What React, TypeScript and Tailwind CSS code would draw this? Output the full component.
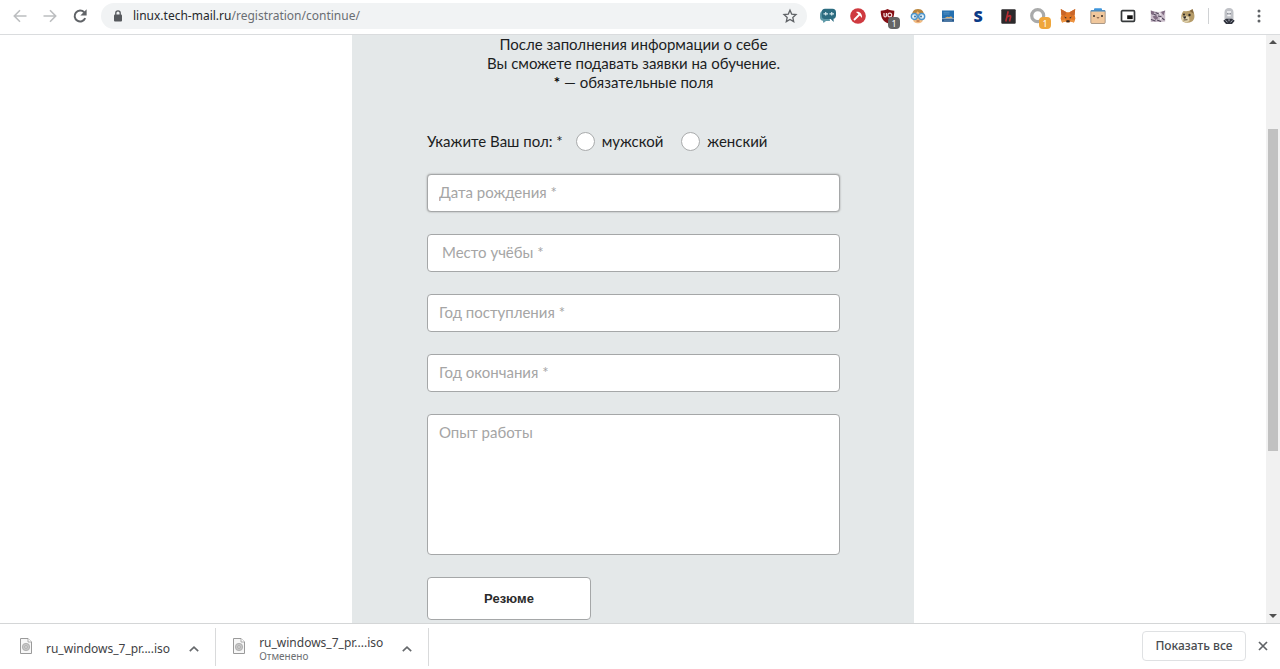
import type { ReactNode } from 'react';

function IconButton({ label, children }: { label: string; children: ReactNode }) {
  return (
    <button type="button" aria-label={label} className="flex h-7 w-[30px] shrink-0 items-center justify-center">
      {children}
    </button>
  );
}

function BackIcon() {
  return (
    <svg width="16" height="16" viewBox="0 0 16 16" fill="none" stroke="#bcbec0" strokeWidth="1.6">
      <path d="M14.5 8H2.5M8 2.3 2.3 8 8 13.7" />
    </svg>
  );
}

function ForwardIcon() {
  return (
    <svg width="16" height="16" viewBox="0 0 16 16" fill="none" stroke="#bcbec0" strokeWidth="1.6">
      <path d="M1.5 8h12M8 2.3 13.7 8 8 13.7" />
    </svg>
  );
}

function ReloadIcon() {
  return (
    <svg width="16" height="16" viewBox="0 0 16 16">
      <path d="M13.2 10.2A5.500 5.500 0 1 1 12.2 4.300" fill="none" stroke="#606367" strokeWidth="2" />
      <path d="M14.600 1.200v6.200H8.400z" fill="#606367" />
    </svg>
  );
}

function LockIcon() {
  return (
    <svg width="10" height="12" viewBox="0 0 10 12" className="shrink-0">
      <rect x="1" y="4.5" width="8" height="7" rx="1" fill="#56595d" />
      <path d="M2.8 5V3a2.2 2.2 0 0 1 4.4 0v2" fill="none" stroke="#56595d" strokeWidth="1.3" />
    </svg>
  );
}

function StarIcon() {
  return (
    <svg width="16" height="16" viewBox="0 0 16 16" fill="none" stroke="#606367" strokeWidth="1.3">
      <path d="m8 2.2 1.7 3.9 4.3.4-3.2 2.9.9 4.2L8 11.4l-3.7 2.2.9-4.2L2 6.5l4.3-.4z" />
    </svg>
  );
}

function ChatIcon() {
  return (
    <svg width="18" height="16" viewBox="0 0 18 16">
      <path d="M4 3C2 3.200 1 4.500 1 6.500v3c0 2 1.200 3 2.800 3.200L4.500 15l2.500-2h4l-.5-3z" fill="#5f9aa8" />
      <path d="M6 .8h7.500c2.300 0 3.500 1.200 3.500 3.500v3c0 2-1 3.300-2.500 3.500l.2 3.200-3-3H6c-2.200 0-3.300-1.300-3.300-3.300V4.300C2.700 2 3.800.8 6 .8z" fill="#2c6c80" />
      <path d="M4.500 5.800H9M6.700 4v3.600M10.500 5.800H15M12.700 4v3.600" stroke="#d6e8ec" strokeWidth="1.200" />
    </svg>
  );
}

function PickIcon() {
  return (
    <svg width="16" height="16" viewBox="0 0 16 16">
      <circle cx="8" cy="8" r="7.800" fill="#cf3a40" />
      <path d="m4 12 6-6" stroke="#fff" strokeWidth="1.800" />
      <path d="M6 4c3.500-1 6.500 2 6 6l-2-2.300L8.300 6z" fill="#fff" />
    </svg>
  );
}

function ShieldIcon() {
  return (
    <span className="relative block h-4 w-4">
      <svg width="16" height="16" viewBox="0 0 16 16">
        <path d="M7.500 1c2 1.200 4.500 1.700 6.800 1.700C14.300 9 12.500 13 7.500 15.200 2.500 13 .7 9 .7 2.700 3 2.700 5.500 2.200 7.500 1z" fill="#850f14" />
        <path d="M4 5v2.700q0 1.200 1.200 1.200T6.400 7.700V5" fill="none" stroke="#f4dede" strokeWidth="1.200" />
        <circle cx="9.800" cy="7" r="1.900" fill="none" stroke="#f4dede" strokeWidth="1.200" />
      </svg>
      <span className="absolute top-[9px] left-2 flex h-3 w-3 items-center justify-center rounded-sm bg-[#646464] text-[9px] leading-none text-white">
        1
      </span>
    </span>
  );
}

function GlassesIcon() {
  return (
    <svg width="16" height="16" viewBox="0 0 16 16">
      <path d="M2 10C1.500 4 3.500 1 8 1s6.500 3 6 9l-1.500 2h-9z" fill="#b8843c" />
      <path d="M3 6.500h10v4.500c0 3-2.300 4.300-5 4.300S3 14 3 11z" fill="#f3bd83" />
      <path d="M4.500 6.500C6 5.500 7 4.300 7.500 3.300 9 4.800 10 5.700 12 6.500z" fill="#f0b87c" />
      <circle cx="4.300" cy="8.500" r="3" fill="#e3f1fa" stroke="#4b95cd" strokeWidth="1.400" />
      <circle cx="11.700" cy="8.500" r="3" fill="#e3f1fa" stroke="#4b95cd" strokeWidth="1.400" />
      <circle cx="5" cy="8.500" r=".9" fill="#2d6591" />
      <circle cx="11" cy="8.500" r=".9" fill="#2d6591" />
      <path d="M6.500 13h3" stroke="#9d5131" />
    </svg>
  );
}

function LaptopIcon() {
  return (
    <svg width="14" height="14" viewBox="0 0 14 14">
      <rect x="1" y="1.500" width="12" height="8" fill="#2670b0" />
      <path d="M2.500 3.300h6M2.500 5h6" stroke="#5c97c6" strokeWidth=".8" />
      <path d="M1 9.500h12v3.300H1z" fill="#24588e" />
      <path d="M3.500 9.300q2-2 3.500-1.500t3-.5l2 2z" fill="#dcae72" />
      <path d="M1 9.700h12" stroke="#9fb3c4" strokeWidth=".8" />
      <path d="M3 11.300h8" stroke="#5f8ab3" strokeWidth=".8" />
    </svg>
  );
}

function HypeIcon() {
  return (
    <svg width="15" height="15" viewBox="0 0 15 15">
      <rect x=".3" y=".3" width="14.400" height="14.400" rx="1" fill="#2b292b" />
      <path d="M7.200 2.200 4.800 12.500M6 8q4-2.800 3.600 0L8.500 12.500" fill="none" stroke="#b92c32" strokeWidth="1.600" />
    </svg>
  );
}

function RingIcon() {
  return (
    <span className="relative block h-4 w-4">
      <svg width="16" height="16" viewBox="0 0 16 16">
        <circle cx="7.700" cy="7.700" r="6" fill="none" stroke="#a9aaaa" strokeWidth="3.200" />
      </svg>
      <span className="absolute top-[9px] left-[9px] flex h-3 w-3 items-center justify-center rounded-sm bg-[#efa63b] text-[9px] leading-none text-white">
        1
      </span>
    </span>
  );
}

function FoxIcon() {
  return (
    <svg width="16" height="16" viewBox="0 0 16 16">
      <path d="m.8 1 5.700 3.300h3L15.200 1l-.6 6 .8 3.500-1.400 4-3.500-1-1.500 1H7l-1.500-1-3.500 1-1.400-4L1.400 7z" fill="#e27828" />
      <path d="m.8 1 5.700 3.300L5 7.500 1.400 7zM15.200 1 9.500 4.300 11 7.500l3.600-.5z" fill="#c9662a" />
      <path d="m4 8.500 2.500 1-.5 1.200zM12 8.500l-2.500 1 .5 1.200z" fill="#33302d" />
      <path d="M6.500 12.200h3l.2 2H6.300z" fill="#352a25" />
      <path d="m1.500 12 4-.5v2l-3.500 1zM14.500 12l-4-.5v2l3.500 1z" fill="#ec9440" />
    </svg>
  );
}

function FaceBagIcon() {
  return (
    <svg width="16" height="16" viewBox="0 0 16 16">
      <rect x="4" y=".2" width="8" height="3.500" rx="1" fill="#3e95db" />
      <rect x=".8" y="2.500" width="14.400" height="13" rx="1" fill="#f0c79c" stroke="#8a7868" strokeWidth=".7" />
      <path d="M.8 2.200h14.400v1.300H.8z" fill="#438dc9" />
      <circle cx="4" cy="8" r="1" fill="#302b29" />
      <circle cx="12" cy="8" r="1" fill="#302b29" />
      <path d="M6.800 9.500q1.200 1 2.400 0" fill="none" stroke="#654434" strokeWidth=".9" />
    </svg>
  );
}

function PipIcon() {
  return (
    <svg width="16" height="16" viewBox="0 0 16 16">
      <rect x="1.500" y="2.700" width="13" height="10.600" rx="1" fill="#fff" stroke="#35383a" strokeWidth="1.700" />
      <rect x="7.200" y="7.300" width="5.500" height="3.800" fill="#111" />
    </svg>
  );
}

function CatIcon() {
  return (
    <svg width="16" height="16" viewBox="0 0 16 16">
      <path d="M.8 2.500 5 3.500l3.500.5 3.500-.5 3.200-1v11l-4 .5H.8z" fill="#cbbecb" />
      <path d="m.8 2.500 4 1.500-1.800 3-2-1zM15.200 2.500 11 4l2.500 3.500zM2.500 8.500 6 7.500l2.500 2.500-3 2z" fill="#806b82" />
      <path d="M5.500 4.500 10 6.500M3.500 6.300l3 1M8 8l3.500.8M1 11.500l4.500 1.500M7 12l4 1.500M12 10l2.500 2" stroke="#51465b" strokeWidth="1.100" />
      <path d="m9.500 4 2 3-3-.5zM10 9.500l2 1-2 1.500z" fill="#f5eff4" />
    </svg>
  );
}

function DogIcon() {
  return (
    <svg width="16" height="16" viewBox="0 0 16 16">
      <path d="M3.500 3 6 3.300l3.500-.6L12.700 1l1 3.500c1.300 3.500 1 7-1.700 9-3.500 2-8 1.500-10-.8C.5 9 1.300 5.500 3.500 3z" fill="#b69c69" />
      <path d="m9.500 3 3-1.800 1.300 4.500z" fill="#846942" />
      <path d="M1.700 9 5.500 7.500 9 9l.5 4L6 14.500 2 12.700z" fill="#e2d3ad" />
      <circle cx="4" cy="6.500" r="1" fill="#2c2823" />
      <circle cx="9.500" cy="7" r="1.200" fill="#2c2823" />
      <path d="m3 8.500 3.300-.3-.8 2.300-1.500.2z" fill="#292525" />
      <path d="m3.500 12 4-.3" stroke="#574a37" />
    </svg>
  );
}

function AvatarIcon() {
  return (
    <svg width="14" height="18" viewBox="0 0 14 18">
      <path d="M2.500 12.500V5.500Q2.500 1 7 1t4.500 4.500v7z" fill="#bfc1c6" />
      <path d="M5 5h4M5.300 8.500h3.400" stroke="#f5f5f7" strokeWidth="1.500" />
      <path d="M5 6.700h1.300M7.700 6.700H9" stroke="#7e828a" />
      <path d="M1.300 13.700 4 11.700h6l2.700 2L10 17H4z" fill="#2f323c" />
      <path d="m3.500 13.500 2 1.700M10.500 13.500l-2 1.700M7 12.200v2" stroke="#a7abb8" />
    </svg>
  );
}

function MenuIcon() {
  return (
    <svg width="4" height="14" viewBox="0 0 4 14" fill="#606367">
      <circle cx="2" cy="2" r="1.500" />
      <circle cx="2" cy="7" r="1.500" />
      <circle cx="2" cy="12" r="1.500" />
    </svg>
  );
}

function BrowserBar() {
  return (
    <header className="flex h-[35px] shrink-0 items-center border-b border-[#dadcde] bg-white pr-[6px] pb-[2px] pl-[5px]">
      <IconButton label="Назад"><BackIcon /></IconButton>
      <IconButton label="Вперёд"><ForwardIcon /></IconButton>
      <IconButton label="Обновить"><ReloadIcon /></IconButton>
      <div className="mx-[6px] flex h-[26px] min-w-0 flex-1 items-center rounded-full bg-[#f1f3f4] pr-[2px] pl-3">
        <LockIcon />
        <a href="#address" className="ml-[10px] flex-1 truncate font-['Noto_Sans',sans-serif] text-xs text-[#6a6e73]">
          <span className="text-[#26282b]">linux.tech-mail.ru</span>/registration/continue/
        </a>
        <IconButton label="Добавить в закладки"><StarIcon /></IconButton>
      </div>
      <IconButton label="Сообщения"><ChatIcon /></IconButton>
      <IconButton label="Инструмент"><PickIcon /></IconButton>
      <IconButton label="Блокировщик"><ShieldIcon /></IconButton>
      <IconButton label="Помощник"><GlassesIcon /></IconButton>
      <IconButton label="Компьютер"><LaptopIcon /></IconButton>
      <IconButton label="Поиск">
        <span className="font-['Noto_Sans',sans-serif] text-base leading-none font-black text-[#0b3b87]">S</span>
      </IconButton>
      <IconButton label="Панель"><HypeIcon /></IconButton>
      <IconButton label="Уведомления"><RingIcon /></IconButton>
      <IconButton label="Кошелёк"><FoxIcon /></IconButton>
      <IconButton label="Персонаж"><FaceBagIcon /></IconButton>
      <IconButton label="Картинка в картинке"><PipIcon /></IconButton>
      <IconButton label="Кот"><CatIcon /></IconButton>
      <IconButton label="Собака"><DogIcon /></IconButton>
      <div className="mx-[5px] h-4 w-px bg-[#d0d2d4]" />
      <IconButton label="Профиль"><AvatarIcon /></IconButton>
      <IconButton label="Меню"><MenuIcon /></IconButton>
    </header>
  );
}

const fieldStyle =
  'block w-full rounded-[4px] border border-[#a5a7a8] bg-white px-[11px] text-[15px] text-[#222] outline-none placeholder:text-[#a5a5a5]';

const inputStyle = `${fieldStyle} h-[38px] pb-[2px]`;

const radioStyle =
  'h-[19px] w-[19px] appearance-none rounded-full border border-[#a9abac] bg-white checked:border-4';

function RegistrationForm() {
  return (
    <form className="mx-auto min-h-full w-full max-w-[562px] bg-[#e4e8e9] pr-[74px] pb-[3px] pl-[75px] font-[Lato,sans-serif] text-[15px] leading-[19px] text-[#1c1e1f]">
      <p className="text-center">
        После заполнения информации о себе
        <br />
        Вы сможете подавать заявки на обучение.
        <br />
        <b className="text-black">*</b> — обязательные поля
      </p>
      <div role="radiogroup" aria-labelledby="gender-label" className="mt-[37px] flex h-6 items-center">
        <span id="gender-label" className="mr-[13px]">Укажите Ваш пол: *</span>
        <label className="mr-[18px] flex items-center gap-[7px]">
          <input type="radio" name="gender" className={radioStyle} />
          мужской
        </label>
        <label className="flex items-center gap-[7px]">
          <input type="radio" name="gender" className={radioStyle} />
          женский
        </label>
      </div>
      <div className="mt-[21px] flex flex-col gap-[22px]">
        <input aria-label="Дата рождения" placeholder="Дата рождения *" className={`${inputStyle} shadow-[0_0_2px_#999]`} />
        <input aria-label="Место учёбы" placeholder="Место учёбы *" className={`${inputStyle} indent-[3px]`} />
        <input aria-label="Год поступления" placeholder="Год поступления *" className={inputStyle} />
        <input aria-label="Год окончания" placeholder="Год окончания *" className={inputStyle} />
        <textarea aria-label="Опыт работы" placeholder="Опыт работы" className={`${fieldStyle} h-[141px] resize-none py-2`} />
        <button type="button" className="h-[43px] w-[164px] rounded-[4px] border border-[#a5a7a8] bg-white font-['Liberation_Sans',sans-serif] text-[13px] font-bold text-[#2b2b2b]">
          Резюме
        </button>
      </div>
    </form>
  );
}

function Scrollbar() {
  return (
    <div aria-hidden="true" className="flex w-[14px] shrink-0 flex-col items-center bg-[#f1f1f1]">
      <div className="flex h-[14px] items-center">
        <svg width="8" height="4" viewBox="0 0 8 4" fill="#505050"><path d="M4 0 8 4H0z" /></svg>
      </div>
      <div className="flex-80" />
      <div className="w-[10px] flex-322 bg-[#c1c1c1]" />
      <div className="flex-158" />
      <div className="flex h-[14px] items-center">
        <svg width="8" height="4" viewBox="0 0 8 4" fill="#505050"><path d="M0 0h8L4 4z" /></svg>
      </div>
    </div>
  );
}

function DiscIcon() {
  return (
    <svg width="12" height="16" viewBox="0 0 12 16" className="mb-[6px] shrink-0">
      <path d="M.5.5H8l3.500 3.500v11.500H.5z" fill="#f7f7f7" stroke="#9a9a9a" />
      <path d="M8 .5V4h3.500" fill="#fff" stroke="#9a9a9a" strokeWidth=".8" />
      <circle cx="6" cy="9" r="3.700" fill="#c6c6c6" stroke="#a5a5a5" strokeWidth=".7" />
      <circle cx="6" cy="9" r="1.300" fill="#eee" stroke="#999" strokeWidth=".7" />
    </svg>
  );
}

function Download({ name, status }: { name: string; status?: string }) {
  return (
    <div className="flex h-[38px] items-center border-r border-[#d9dadb] pt-1 pr-[6px]">
      <DiscIcon />
      <div className="ml-[14px] text-[#3f4245]">
        <div className="text-xs leading-[14px]">{name}</div>
        {status && <div className="text-[10px] leading-3 text-[#6d7073]">{status}</div>}
      </div>
      <button type="button" aria-label={`Действия: ${name}`} className="ml-[9px] flex h-[30px] w-[30px] items-center justify-center">
        <svg width="10" height="6" viewBox="0 0 10 6" fill="none" stroke="#66696c" strokeWidth="1.600"><path d="m.8 5.200 4.200-4 4.200 4" /></svg>
      </button>
    </div>
  );
}

function DownloadBar() {
  return (
    <footer className="flex h-[46px] shrink-0 items-center border-t border-[#d4d6d7] bg-white pr-[2px] pl-5 font-['Noto_Sans',sans-serif]">
      <div className="flex gap-[17px]">
        <Download name="ru_windows_7_pr....iso" />
        <Download name="ru_windows_7_pr....iso" status="Отменено" />
      </div>
      <button type="button" className="mr-[2px] mb-[2px] ml-auto h-[30px] w-[104px] rounded-[4px] border border-[#dfe1e3] text-xs font-medium text-[#494c50]">
        Показать все
      </button>
      <div className="mb-[2px]">
        <IconButton label="Закрыть">
          <svg width="10" height="10" viewBox="0 0 10 10" stroke="#606367" strokeWidth="1.700"><path d="m1 1 8 8M9 1 1 9" /></svg>
        </IconButton>
      </div>
    </footer>
  );
}

export default function App() {
  return (
    <div className="flex h-screen flex-col overflow-hidden bg-white">
      <BrowserBar />
      <div className="flex min-h-0 flex-1">
        <main className="min-w-0 flex-1 overflow-hidden">
          <RegistrationForm />
        </main>
        <Scrollbar />
      </div>
      <DownloadBar />
    </div>
  );
}
